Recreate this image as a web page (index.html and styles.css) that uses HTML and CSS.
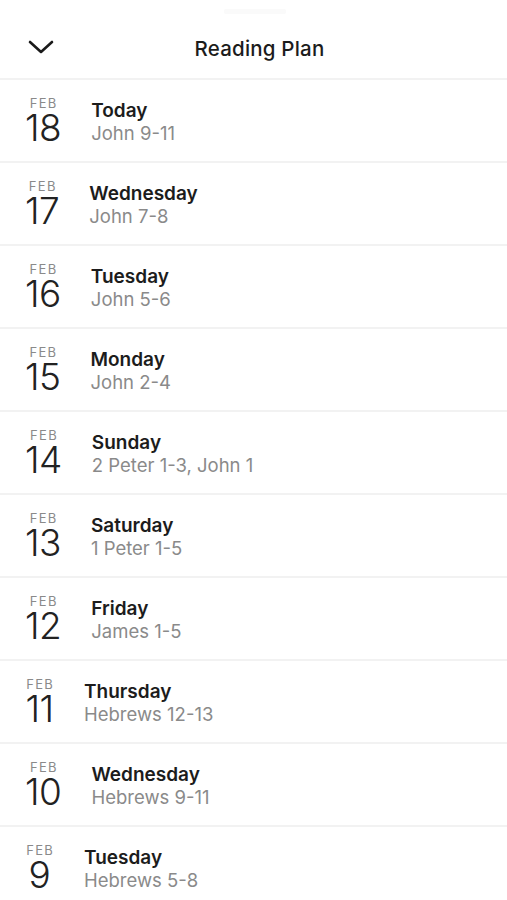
FILE: index.html
```html
<!DOCTYPE html>
<html>
<head>
<meta charset="utf-8">
<link rel="stylesheet" href="styles.css">
</head>
<body>
<header class="header">
  <div class="grabber"></div>
  <button class="close" aria-label="Close">
    <svg width="26" height="16" viewBox="0 0 26 16"><path d="M2 3 L13 13 L24 3" fill="none" stroke="#1a1a1a" stroke-width="2.6" stroke-linecap="round" stroke-linejoin="round"/></svg>
  </button>
  <h1 class="title">Reading Plan</h1>
</header>
<ul class="list">
  <li class="row"><div class="date"><span class="mon">FEB</span><span class="day">18</span></div><div class="info"><span class="name">Today</span><span class="ref">John 9-11</span></div></li>
  <li class="row"><div class="date"><span class="mon">FEB</span><span class="day">17</span></div><div class="info"><span class="name">Wednesday</span><span class="ref">John 7-8</span></div></li>
  <li class="row"><div class="date"><span class="mon">FEB</span><span class="day">16</span></div><div class="info"><span class="name">Tuesday</span><span class="ref">John 5-6</span></div></li>
  <li class="row"><div class="date"><span class="mon">FEB</span><span class="day">15</span></div><div class="info"><span class="name">Monday</span><span class="ref">John 2-4</span></div></li>
  <li class="row"><div class="date"><span class="mon">FEB</span><span class="day">14</span></div><div class="info"><span class="name">Sunday</span><span class="ref">2 Peter 1-3, John 1</span></div></li>
  <li class="row"><div class="date"><span class="mon">FEB</span><span class="day">13</span></div><div class="info"><span class="name">Saturday</span><span class="ref">1 Peter 1-5</span></div></li>
  <li class="row"><div class="date"><span class="mon">FEB</span><span class="day">12</span></div><div class="info"><span class="name">Friday</span><span class="ref">James 1-5</span></div></li>
  <li class="row"><div class="date"><span class="mon">FEB</span><span class="day">11</span></div><div class="info"><span class="name">Thursday</span><span class="ref">Hebrews 12-13</span></div></li>
  <li class="row"><div class="date"><span class="mon">FEB</span><span class="day">10</span></div><div class="info"><span class="name">Wednesday</span><span class="ref">Hebrews 9-11</span></div></li>
  <li class="row"><div class="date"><span class="mon">FEB</span><span class="day">9</span></div><div class="info"><span class="name">Tuesday</span><span class="ref">Hebrews 5-8</span></div></li>
</ul>
</body>
</html>
```
FILE: styles.css
```css
* { box-sizing: border-box; }
html, body {
  margin: 0;
  padding: 0;
  background: #fff;
  font-family: Inter, "Noto Sans", "Liberation Sans", sans-serif;
  color: #1c1c1c;
  overflow: hidden;
}
.header {
  position: relative;
  height: 80px;
  border-bottom: 2px solid #f2f2f2;
  display: flex;
  align-items: center;
  justify-content: center;
  padding-top: 20px;
}
.grabber {
  position: absolute;
  top: 9px;
  left: 224px;
  width: 62px;
  height: 5px;
  background: #fafafa;
  border-radius: 2px;
}
.close {
  position: absolute;
  left: 28px;
  top: 39px;
  width: 26px;
  height: 16px;
  padding: 0;
  border: 0;
  background: none;
  display: block;
}
.close svg { display: block; }
.title {
  margin: 0;
  font-size: 20.5px;
  font-weight: 500;
  letter-spacing: 0.2px;
  color: #1c1c1c;
  line-height: 24px;
  transform: translateX(6px);
}
.list {
  list-style: none;
  margin: 0;
  padding: 0;
}
.row {
  height: 83px;
  border-bottom: 2px solid #f2f2f2;
  display: flex;
  align-items: center;
  padding-left: 25px;
  gap: 30px;
}
.date {
  display: flex;
  flex-direction: column;
  align-items: center;
  min-width: 29px;
}
.mon {
  font-size: 13px;
  line-height: 13px;
  letter-spacing: 1.3px;
  color: #8a8a8a;
  margin-right: -1.3px;
}
.day {
  font-size: 37px;
  font-weight: 300;
  line-height: 35px;
  color: #222;
  letter-spacing: -0.5px;
}
.info {
  display: flex;
  flex-direction: column;
  padding-top: 2px;
}
.name {
  font-size: 19px;
  font-weight: 600;
  line-height: 23px;
  color: #1c1c1c;
}
.ref {
  font-size: 18.5px;
  line-height: 22px;
  color: #8a8a8a;
}
```
